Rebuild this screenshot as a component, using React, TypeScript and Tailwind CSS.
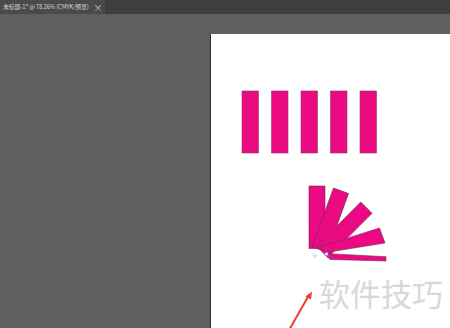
const bars = [242, 271.5, 301, 330.5, 360];
const fanAngles = [0, 20, 45];

export default function App() {
  return (
    <div className="w-[450px] h-[328px] bg-[#5f5f5f] flex flex-col overflow-hidden font-['Noto_Sans_CJK_SC',sans-serif]">
      {/* document tab bar */}
      <div className="h-[14px] flex bg-[#3e3e3e]">
        <div className="shrink-0 bg-[#4a4a4a] flex items-center pl-[3px] pr-[3px] gap-[5px] text-[6px] tracking-[-0.2px] leading-none text-[#d2d2d2] whitespace-nowrap">
          <span>未标题-1* @ 78.26% (CMYK/预览)</span>
          <span className="text-[9px]">×</span>
        </div>
      </div>

      {/* canvas */}
      <div className="flex-1 flex pl-[210px] pt-[20px]">
        <div className="flex-1 relative bg-white border-l border-[#2e2e2e]">
          <svg
            className="absolute left-0 top-0 w-[239px] h-[294px]"
            viewBox="211 34 239 294"
          >
            {bars.map((x) => (
              <rect
                key={x}
                x={x}
                y={91}
                width={16.5}
                height={62}
                fill="#ec0a82"
                stroke="#8a3a72"
                strokeWidth={0.6}
              />
            ))}

            {fanAngles.map((a) => (
              <rect
                key={a}
                x={309}
                y={186}
                width={16}
                height={62.5}
                fill="#ec0a82"
                stroke="#6e2a5c"
                strokeWidth={0.6}
                transform={`rotate(${a} 315.5 256.5)`}
              />
            ))}
            <polygon
              points="379.5,228 385,243 326,252.5 319.5,247"
              fill="#ec0a82"
              stroke="#6e2a5c"
              strokeWidth={0.6}
            />
            <polygon
              points="324.5,253.5 386,256.7 386,261 330,259.5"
              fill="#ec0a82"
              stroke="#6e2a5c"
              strokeWidth={0.6}
            />

            {/* rotate origin + selection */}
            <path d="M315 253.5v5M312.5 256h5" stroke="#8fdcea" strokeWidth={0.8} />
            <line x1={326.5} y1={254} x2={335} y2={260} stroke="#7a5fd6" strokeWidth={0.8} />
            <rect x={325} y={252.5} width={3} height={3} fill="#fff" stroke="#7a5fd6" strokeWidth={0.6} />

            {/* red arrow */}
            <line x1={288} y1={332} x2={309} y2={295} stroke="#e8402f" strokeWidth={2} />
            <polygon points="312,291.5 311,299.5 305.5,296.5" fill="#e8402f" />
          </svg>

          <span className="absolute left-[108px] top-[243px] text-[31px] leading-[31px] text-[#d8d8d8] whitespace-nowrap">
            软件技巧
          </span>
        </div>
      </div>
    </div>
  );
}
